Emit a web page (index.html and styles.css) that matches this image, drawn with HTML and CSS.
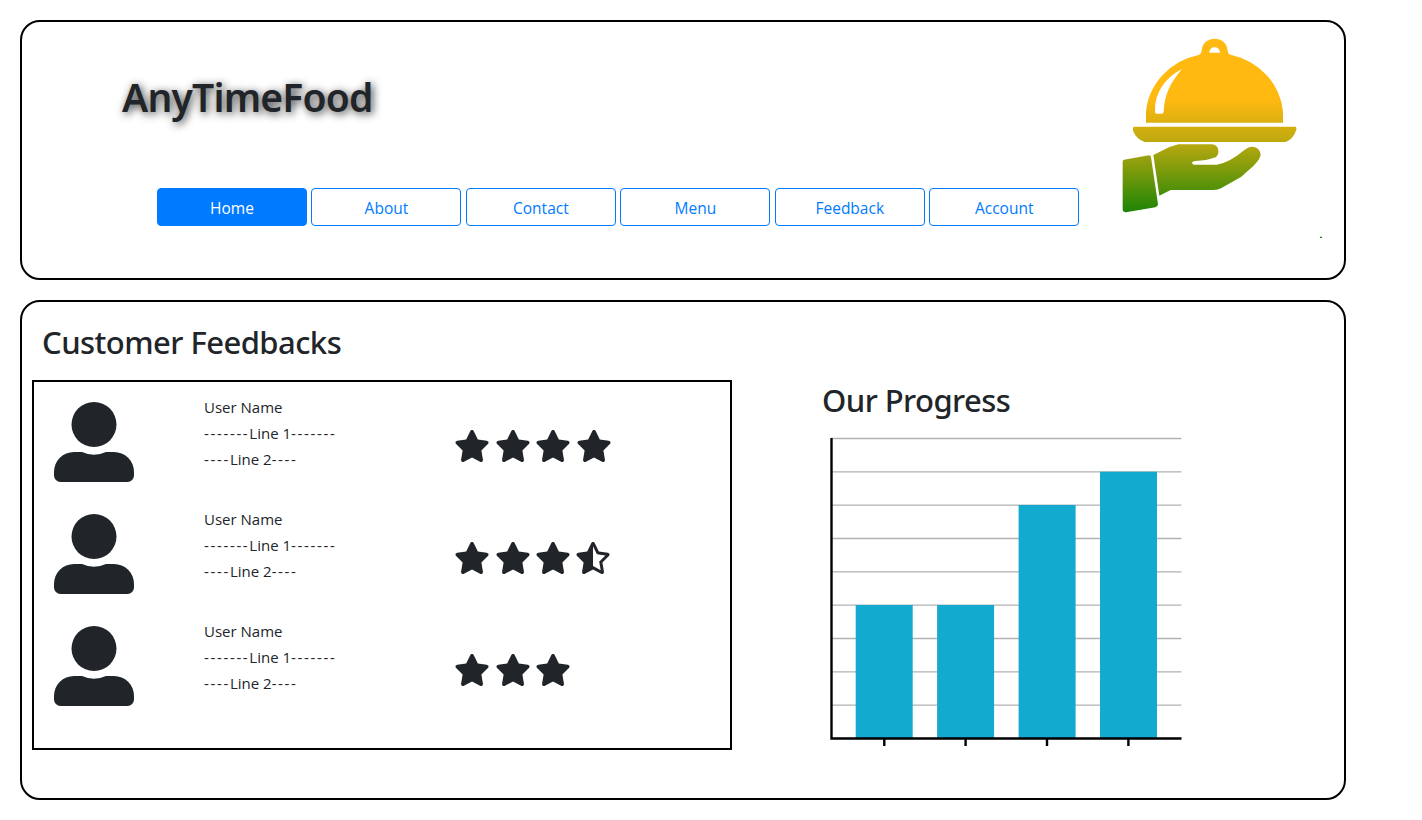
FILE: index.html
```html
<!DOCTYPE html>
<html lang="en">
<head>
<meta charset="utf-8">
<title>AnyTimeFood</title>
<link rel="stylesheet" href="styles.css">
</head>
<body>
<svg class="symbols" aria-hidden="true">
  <symbol id="user" viewBox="0 0 80 80">
    <circle cx="40" cy="22.5" r="22.5"/>
    <path d="M20 50h8q12 5.500 24 0h8a20 20 0 0 1 20 20v3.500a6.500 6.500 0 0 1-6.500 6.500h-67a6.500 6.500 0 0 1-6.500-6.500v-3.500a20 20 0 0 1 20-20z"/>
  </symbol>
  <symbol id="star" viewBox="0 0 576 512">
    <path d="M316.900 18C311.600 7 300.400 0 288.100 0s-23.400 7-28.800 18L195 150.300 51.400 171.500c-12 1.800-22 10.200-25.700 21.700s-.700 24.200 7.900 32.700L137.800 329 113.200 474.700c-2 12 3 24.200 12.900 31.300s23 8 33.800 2.300l128.300-68.500 128.300 68.500c10.800 5.700 23.900 4.900 33.800-2.300s14.900-19.300 12.900-31.300L438.500 329 542.700 225.900c8.600-8.500 11.700-21.200 7.900-32.700s-13.700-19.900-25.700-21.700L381.200 150.300 316.900 18z"/>
  </symbol>
  <symbol id="half" viewBox="48 0 576 512">
    <path fill-rule="evenodd" d="M320 384.500L343 396 443 450 424 340 419 312 438 294 519 214 408 198 381 193 371 173 320 68zM495.100 474.700c2 12-3 24.200-12.900 31.300s-23 8-33.800 2.300L320.100 439.800 191.800 508.300C181 514 167.900 513.100 158 506s-14.900-19.300-12.900-31.300L169.800 329 65.600 225.900c-8.600-8.500-11.700-21.200-7.900-32.700s13.700-19.900 25.700-21.700L227 150.300 291.400 18c5.400-11 16.500-18 28.800-18s23.400 7 28.800 18l64.300 132.300 143.600 21.200c12 1.800 22 10.200 25.700 21.700s.7 24.200-7.900 32.700L470.500 329l24.600 145.700z"/>
  </symbol>
</svg>

<header class="card header">
  <div class="brand">
    <h1>AnyTimeFood</h1>
    <nav>
      <a class="active">Home</a>
      <a>About</a>
      <a>Contact</a>
      <a>Menu</a>
      <a>Feedback</a>
      <a>Account</a>
    </nav>
  </div>
  <svg class="logo" viewBox="66 48 600 612">
    <defs>
      <linearGradient id="dish" gradientUnits="userSpaceOnUse" x1="0" y1="240" x2="0" y2="575">
        <stop offset="0" stop-color="#ffb911"/>
        <stop offset=".38" stop-color="#bca90f"/>
        <stop offset="1" stop-color="#1e8506"/>
      </linearGradient>
    </defs>
    <g fill="url(#dish)">
      <path fill-rule="evenodd" d="M138 308V275A205.500 192 0 0 1 298 104Q304 102 305 92C307 44 381 44 383 92Q384 102 392 104A205.500 192 0 0 1 549 275V308ZM328 98H360C360 76 328 76 328 98ZM246 147C190 176 163 224 165 275Q165 281 171 281H185Q191 281 191 274C193 222 214 184 246 147Z"/>
      <path d="M103 320H586Q590 320 589 330Q580 357 557 366H134Q109 357 99 332V324Q99 320 103 320Z"/>
      <path d="M160 405L208 381Q220 378 235 373H335C361 373 362 413 339 414Q322 421 286 423C272 424 275 434 284 434H350Q386 430 432 391C457 369 482 383 482 406C475 430 448 448 424 470L363 505Q354 510 340 510H212L178 527Z"/>
      <path d="M72 419L147 406Q152 405 153 412L174 552Q174 560 166 562L78 577Q68 577 68 568V426Q68 420 72 419Z"/>
      <path d="M660 650h6v4h-6z"/>
    </g>
  </svg>
</header>

<main class="card content">
  <section class="feedbacks">
    <h2>Customer Feedbacks</h2>
    <div class="list">
      <article>
        <svg class="avatar"><use href="#user"/></svg>
        <div class="comment"><p>User Name</p><p><span>-------</span>Line 1<span>-------</span></p><p><span>----</span>Line 2<span>----</span></p></div>
        <div class="stars"><svg><use href="#star"/></svg><svg><use href="#star"/></svg><svg><use href="#star"/></svg><svg><use href="#star"/></svg></div>
      </article>
      <article>
        <svg class="avatar"><use href="#user"/></svg>
        <div class="comment"><p>User Name</p><p><span>-------</span>Line 1<span>-------</span></p><p><span>----</span>Line 2<span>----</span></p></div>
        <div class="stars"><svg><use href="#star"/></svg><svg><use href="#star"/></svg><svg><use href="#star"/></svg><svg><use href="#half"/></svg></div>
      </article>
      <article>
        <svg class="avatar"><use href="#user"/></svg>
        <div class="comment"><p>User Name</p><p><span>-------</span>Line 1<span>-------</span></p><p><span>----</span>Line 2<span>----</span></p></div>
        <div class="stars"><svg><use href="#star"/></svg><svg><use href="#star"/></svg><svg><use href="#star"/></svg></div>
      </article>
    </div>
  </section>
  <section class="progress">
    <h2>Our Progress</h2>
    <svg class="chart" viewBox="0 0 352 310">
      <path class="grid" d="M1 1.500H351.500M1 34.850H351.500M1 68.200H351.500M1 101.500H351.500M1 134.850H351.500M1 168.200H351.500M1 201.500H351.500M1 234.850H351.500M1 268.200H351.500"/>
      <path class="bars" d="M25.700 168h57v133h-57zM107.100 168h57v133h-57zM188.600 68h57v233h-57zM270 34.700h57V301h-57z"/>
      <path class="axis" d="M1.500 1V301.500H351.500M54.300 301v8M135.600 301v8M217 301v8M298.400 301v8"/>
    </svg>
  </section>
</main>
</body>
</html>
```

FILE: styles.css
```css
* { box-sizing: border-box; }

body {
  margin: 0;
  padding: 20px;
  display: flex;
  flex-direction: column;
  gap: 20px;
  background: #fff;
  color: #212529;
  font: 16px/24px "Open Sans", "Noto Sans", sans-serif;
}

h1, h2, p { margin: 0; }
h1, h2 { font-family: "Noto Sans", sans-serif; font-weight: 500; white-space: nowrap; }

.symbols { display: none; }

.card {
  width: 1326px;
  border: 2px solid #000;
  border-radius: 20px;
  display: flex;
}

.header { height: 260px; }
.brand { width: 1100px; padding: 51px 0 0 100px; }

h1 {
  font-size: 39px;
  line-height: 48px;
  font-weight: 600;
  letter-spacing: -.8px;
  text-shadow: 2px 2px 8px #333;
}

nav { display: flex; gap: 4.450px; margin: 67px 0 0 35px; }
nav a {
  flex: 0 0 150px;
  height: 38px;
  padding-top: 7px;
  border: 1px solid #007bff;
  border-radius: 4px;
  color: #007bff;
  text-align: center;
  font-size: 15.500px;
}
nav .active { background: #007bff; color: #fff; }

.logo { width: 200px; height: 204px; margin-top: 14px; }

.content { height: 500px; }
.feedbacks { width: 710px; padding: 21px 0 0 10px; }
h2 { font-size: 31px; line-height: 38px; letter-spacing: -.55px; }
.feedbacks h2 { padding-left: 10px; }

.list {
  width: 700px;
  height: 370px;
  margin-top: 19px;
  padding: 10px 20px;
  border: 2px solid #000;
}
article { display: flex; height: 112px; padding-top: 2px; }
.avatar { width: 80px; height: 80px; margin-top: 8px; fill: #212529; }
.comment { width: 250px; margin-left: 70px; line-height: 26px; font-size: 15px; }
.comment span { letter-spacing: 1.650px; }
.stars { display: flex; gap: 4.500px; margin-top: 36px; }
.stars svg { width: 36px; height: 32px; fill: #212529; }

.progress { padding: 79px 0 0 90px; }
.chart { display: block; width: 352px; height: 310px; margin: 18px 0 0 8px; }
.grid { stroke: #b3b3b3; stroke-width: 1.300; fill: none; }
.bars { fill: #12abcf; }
.axis { fill: none; stroke: #000; stroke-width: 2.400; }
```
